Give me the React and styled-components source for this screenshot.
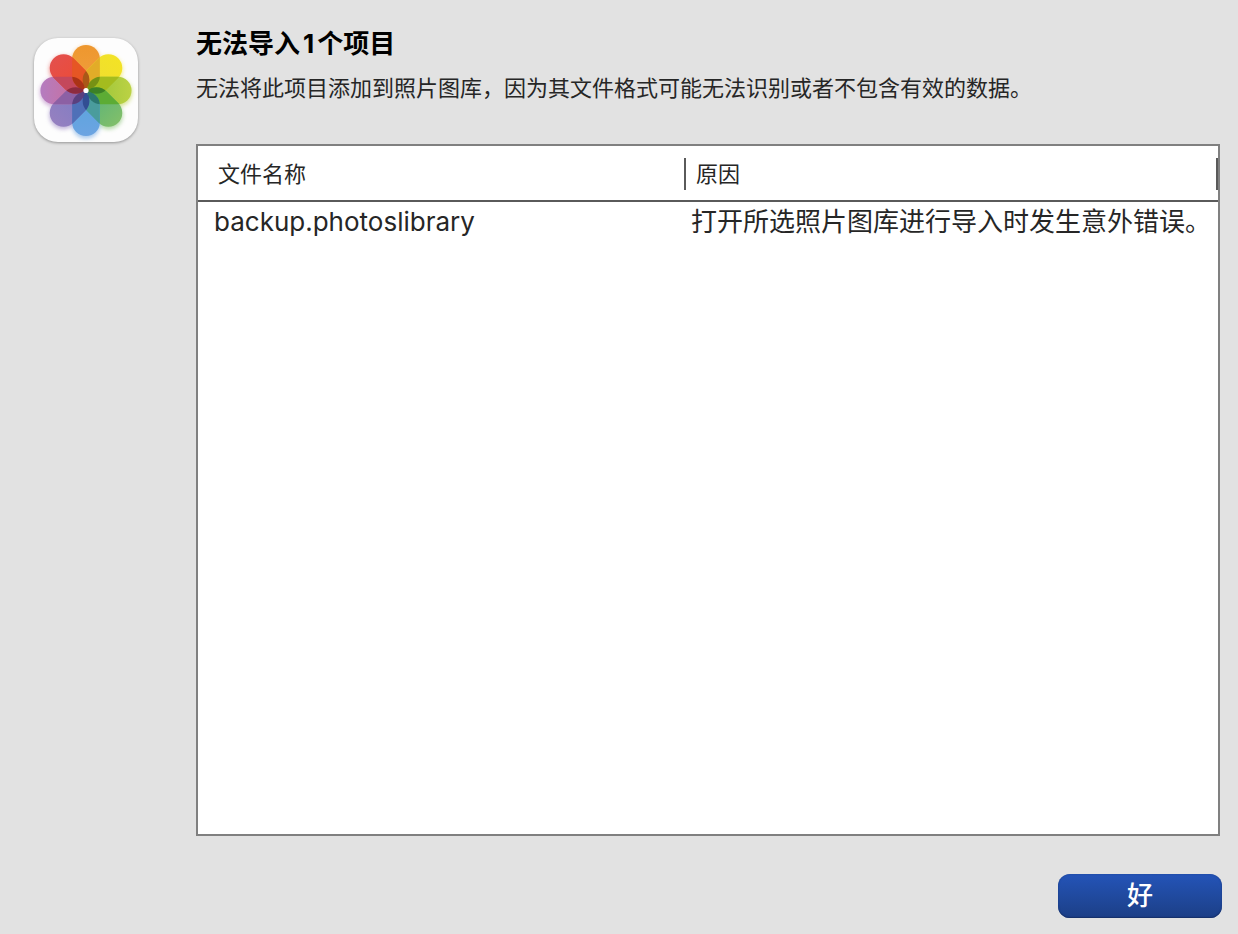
import React from 'react';
import styled, { createGlobalStyle } from "styled-components"

const GlobalStyle = createGlobalStyle`
*{
    box-sizing:border-box;
}
body{
    margin:0;
    background-color:#e2e2e2;
    font-family:Inter, "Noto Sans CJK SC", sans-serif;
    color:#262626;
}
`

const Dialog = styled.main`
display:flex;
align-items:flex-start;
min-height:100vh;
padding:24px 16px 16px 34px;
`

const AppIcon = styled.svg`
flex:none;
width:104px;
height:104px;
margin:14px 58px 0 0;
border-radius:24px;
background-color:#fdfdfd;
box-shadow:0 1px 3px rgba(0,0,0,0.35);
`

const Content = styled.div`
display:flex;
flex-flow:column;
flex:1;
min-width:0;
min-height:calc(100vh - 40px);
`

const Title = styled.h1`
margin:0;
color:#000;
font-size:26px;
font-weight:700;
line-height:40px;
`

const Count = styled.span`
margin:0 3px;
`

const Message = styled.p`
margin:8px 0 40px;
font-size:22px;
line-height:32px;
`

const ListBox = styled.div`
flex:1;
margin-right:2px;
border:2px solid #808080;
background-color:white;
`

const Table = styled.table`
width:100%;
table-layout:fixed;
border-collapse:collapse;
`

const HeadCell = styled.th`
width:${({ $first }) => $first ? `488px` : `auto`};
padding:12px 0 10px;
border-bottom:2px solid #5a5a5a;
font-size:22px;
font-weight:400;
text-align:left;
`

const HeadLabel = styled.div`
height:32px;
padding-left:${({ $first }) => $first ? `20px` : `10px`};
border-right:2px solid #5a5a5a;
line-height:32px;
`

const Cell = styled.td`
padding:0 0 0 ${({ $first }) => $first ? `16px` : `5px`};
font-size:26px;
line-height:40px;
white-space:nowrap;
`

const OkButton = styled.button`
align-self:flex-end;
width:164px;
height:44px;
margin-top:38px;
padding:0;
border:0;
border-radius:12px;
background:linear-gradient(#2454b8, #1c3f86);
box-shadow:inset 0 -1px 1px #16306a, inset 0 0 2px #1b4090;
color:white;
font-family:inherit;
font-size:26px;
font-weight:500;
line-height:44px;
`

// petals run clockwise from the top one, overlap is the part shared with the next petal
const petals = [
    { id: "orange", outer: "#ee972e", inner: "#f0a040", overlap: "#e2ac28", core: "#8a5a12" },
    { id: "yellow", outer: "#f3e325", inner: "#eedc34", overlap: "#a4bc1e", core: "#5f7a10" },
    { id: "lime", outer: "#bcd244", inner: "#94c238", overlap: "#5cac34", core: "#2c6a20" },
    { id: "green", outer: "#80bf6a", inner: "#54b07c", overlap: "#4a9c9c", core: "#1c6458" },
    { id: "blue", outer: "#6ca4e2", inner: "#58a4dc", overlap: "#4f70b8", core: "#243c80" },
    { id: "violet", outer: "#9580c0", inner: "#7c7cc4", overlap: "#8c60a4", core: "#40306c" },
    { id: "pink", outer: "#b47cc0", inner: "#d06c94", overlap: "#c4485c", core: "#701c30" },
    { id: "red", outer: "#e4504c", inner: "#ee4a30", overlap: "#e65624", core: "#8c2010" },
]

const Petal = ({ turn, fill }) => (
    <rect x="-14" y="-46" width="28" height="45" rx="14" fill={fill} transform={`rotate(${turn * 45})`} />
)

const PhotosIcon = () => (
    <AppIcon viewBox="0 0 104 104" aria-hidden="true">
        <defs>
            {petals.map((p, i) => (
                <React.Fragment key={p.id}>
                    <linearGradient id={p.id} x1="0" y1="0" x2="0" y2="1">
                        <stop offset="0" stopColor={p.outer} />
                        <stop offset="1" stopColor={p.inner} />
                    </linearGradient>
                    <clipPath id={`${p.id}-clip`}>
                        <Petal turn={i} />
                    </clipPath>
                </React.Fragment>
            ))}
            <filter id="soft" x="-20%" y="-20%" width="140%" height="140%">
                <feGaussianBlur stdDeviation="2" />
            </filter>
        </defs>
        <g transform="translate(52 54.5)" filter="url(#soft)" opacity="0.6">
            {petals.map((p, i) => <Petal key={p.id} turn={i} fill={p.outer} />)}
        </g>
        <g transform="translate(52 52.5) scale(0.99)">
            {petals.map((p, i) => <Petal key={p.id} turn={i} fill={`url(#${p.id})`} />)}
            {petals.map((p, i) => (
                <g key={p.id} clipPath={`url(#${p.id}-clip)`}>
                    <Petal turn={i + 1} fill={p.overlap} />
                </g>
            ))}
            {petals.map((p, i) => (
                <g key={p.id} clipPath={`url(#${petals[(i + 7) % 8].id}-clip)`} opacity="0.65">
                    <Petal turn={i + 1} fill={p.core} />
                </g>
            ))}
            <circle r="2.6" fill="#fff" />
        </g>
    </AppIcon>
)

const App = () => {
    const items = [
        { name: "backup.photoslibrary", reason: "打开所选照片图库进行导入时发生意外错误。" },
    ]

    return (
        <Dialog lang="zh-CN">
            <GlobalStyle />
            <PhotosIcon />
            <Content>
                <Title>无法导入<Count>{items.length}</Count>个项目</Title>
                <Message>
                    无法将此项目添加到照片图库，因为其文件格式可能无法识别或者不包含有效的数据。
                </Message>
                <ListBox>
                    <Table>
                        <thead>
                            <tr>
                                <HeadCell $first scope="col">
                                    <HeadLabel $first>文件名称</HeadLabel>
                                </HeadCell>
                                <HeadCell scope="col">
                                    <HeadLabel>原因</HeadLabel>
                                </HeadCell>
                            </tr>
                        </thead>
                        <tbody>
                            {items.map(item => (
                                <tr key={item.name}>
                                    <Cell $first>{item.name}</Cell>
                                    <Cell>{item.reason}</Cell>
                                </tr>
                            ))}
                        </tbody>
                    </Table>
                </ListBox>
                <OkButton type="button">好</OkButton>
            </Content>
        </Dialog>
    );
}

export default App;
